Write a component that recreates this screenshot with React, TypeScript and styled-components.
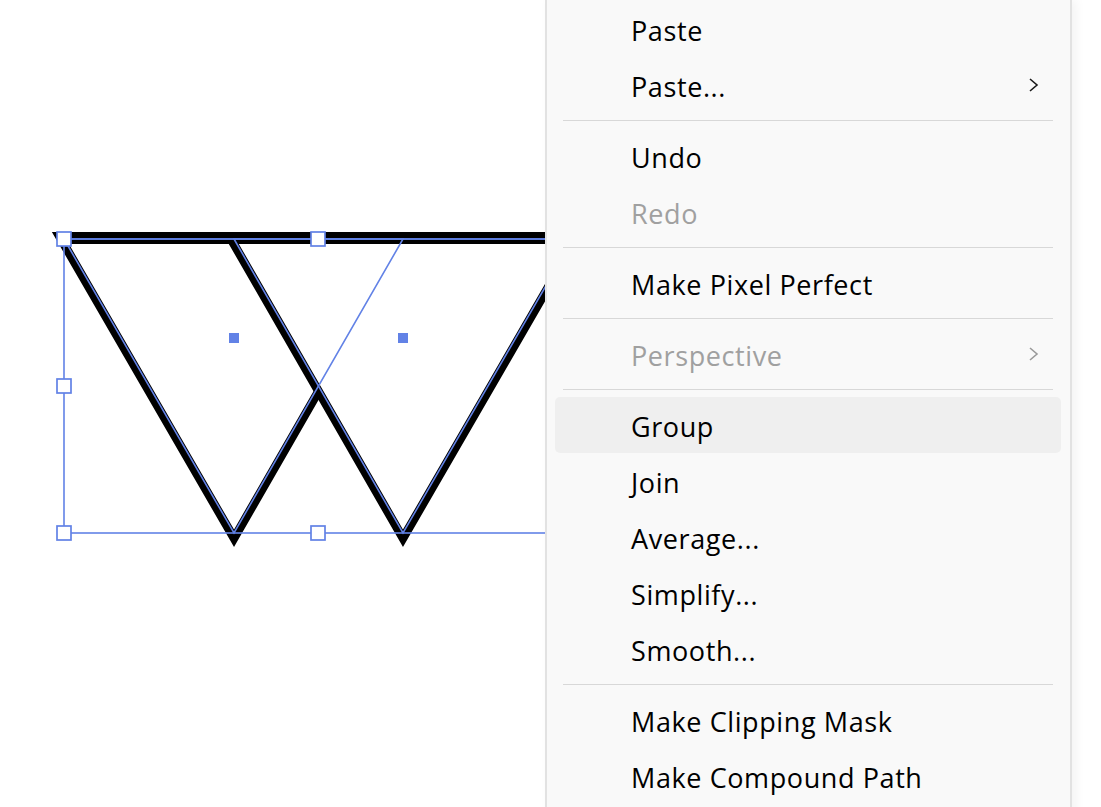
import styled, { createGlobalStyle } from 'styled-components';

type Entry =
  | { kind: 'item'; label: string; disabled?: boolean; active?: boolean; submenu?: boolean }
  | { kind: 'separator' };

const MenuEntries: Entry[] = [
  { kind: 'item', label: 'Paste' },
  { kind: 'item', label: 'Paste...', submenu: true },
  { kind: 'separator' },
  { kind: 'item', label: 'Undo' },
  { kind: 'item', label: 'Redo', disabled: true },
  { kind: 'separator' },
  { kind: 'item', label: 'Make Pixel Perfect' },
  { kind: 'separator' },
  { kind: 'item', label: 'Perspective', disabled: true, submenu: true },
  { kind: 'separator' },
  { kind: 'item', label: 'Group', active: true },
  { kind: 'item', label: 'Join' },
  { kind: 'item', label: 'Average...' },
  { kind: 'item', label: 'Simplify...' },
  { kind: 'item', label: 'Smooth...' },
  { kind: 'separator' },
  { kind: 'item', label: 'Make Clipping Mask' },
  { kind: 'item', label: 'Make Compound Path' },
];

const BLUE = '#6282e6';

// two overlapping equilateral triangles, selected
const TriA = '64,239 403,239 234,533';
const TriB = '234,239 573,239 403,533';

const Handle = ({ x, y }: { x: number; y: number }) => (
  <rect x={x - 7} y={y - 7} width={14} height={14} fill="#fff" stroke={BLUE} strokeWidth={1.7} />
);

const CenterDot = ({ x, y }: { x: number; y: number }) => (
  <rect x={x - 5} y={y - 5} width={10} height={10} fill={BLUE} />
);

// stroke sits mostly outside the path: wide stroke, then white fill on top
const Triangle = ({ points }: { points: string }) => (
  <g>
    <polygon points={points} fill="#fff" stroke="#000" strokeWidth={14} strokeLinejoin="miter" />
    <polygon points={points} fill="#fff" stroke="#000" strokeWidth={3.5} />
  </g>
);

const Artwork = () => (
  <ArtSvg width={1101} height={807} viewBox="0 0 1101 807">
    <Triangle points={TriA} />
    <Triangle points={TriB} />
    <line x1={64} y1={242} x2={573} y2={242} stroke="#000" strokeWidth={4} />
    <polygon points={TriA} fill="none" stroke={BLUE} strokeWidth={1.6} />
    <polygon points={TriB} fill="none" stroke={BLUE} strokeWidth={1.6} />
    <rect x={64} y={239} width={509} height={294} fill="none" stroke={BLUE} strokeWidth={1.6} />
    <CenterDot x={234} y={338} />
    <CenterDot x={403} y={338} />
    <Handle x={64} y={239} />
    <Handle x={318} y={239} />
    <Handle x={64} y={386} />
    <Handle x={64} y={533} />
    <Handle x={318} y={533} />
  </ArtSvg>
);

const Chevron = ({ muted }: { muted?: boolean }) => (
  <svg width="11" height="16" viewBox="0 0 11 16">
    <polyline
      points="2,2 9,8 2,14"
      fill="none"
      stroke={muted ? '#9a9a9a' : '#1a1a1a'}
      strokeWidth={1.6}
    />
  </svg>
);

const App = () => {
  return (
    <>
      <GlobalStyle />
      <Canvas>
        <Artwork />
        <Menu>
          {MenuEntries.map((entry, index) =>
            entry.kind === 'separator' ? (
              <Separator key={index} />
            ) : (
              <MenuItem key={index} $active={!!entry.active} $disabled={!!entry.disabled}>
                <span>{entry.label}</span>
                {entry.submenu && <Chevron muted={entry.disabled} />}
              </MenuItem>
            )
          )}
        </Menu>
      </Canvas>
    </>
  );
};

const GlobalStyle = createGlobalStyle`
  html, body {
    margin: 0;
    padding: 0;
    background: #ffffff;
  }
`;

const Canvas = styled.div`
  position: relative;
  width: 1101px;
  height: 807px;
  overflow: hidden;
  background: #ffffff;
`;

const ArtSvg = styled.svg`
  position: absolute;
  left: 0;
  top: 0;
  display: block;
`;

const Menu = styled.div`
  position: absolute;
  left: 545px;
  top: 0;
  width: 523px;
  height: 830px;
  padding-top: 1px;
  background: #f9f9f9;
  border-left: 2px solid #e2e2e2;
  border-right: 2px solid #e2e2e2;
  box-shadow: 4px 0 10px rgba(0, 0, 0, 0.05);
  font-family: 'Open Sans', 'Noto Sans', sans-serif;
`;

const MenuItem = styled.div<{ $active: boolean; $disabled: boolean }>`
  display: flex;
  align-items: center;
  justify-content: space-between;
  height: 56px;
  margin: 0 9px 0 8px;
  padding: 0 22px 0 76px;
  border-radius: 5px;
  background: ${(props) => (props.$active ? '#efefef' : 'transparent')};
  color: ${(props) => (props.$disabled ? '#a0a0a0' : '#000000')};
  font-size: 27px;
  letter-spacing: 0.6px;
  line-height: 1;

  span {
    padding-top: 3px;
  }

  svg {
    display: block;
  }
`;

const Separator = styled.div`
  height: 1px;
  margin: 7px 17px 7px 16px;
  background: #d8d8d8;
`;

export default App;
